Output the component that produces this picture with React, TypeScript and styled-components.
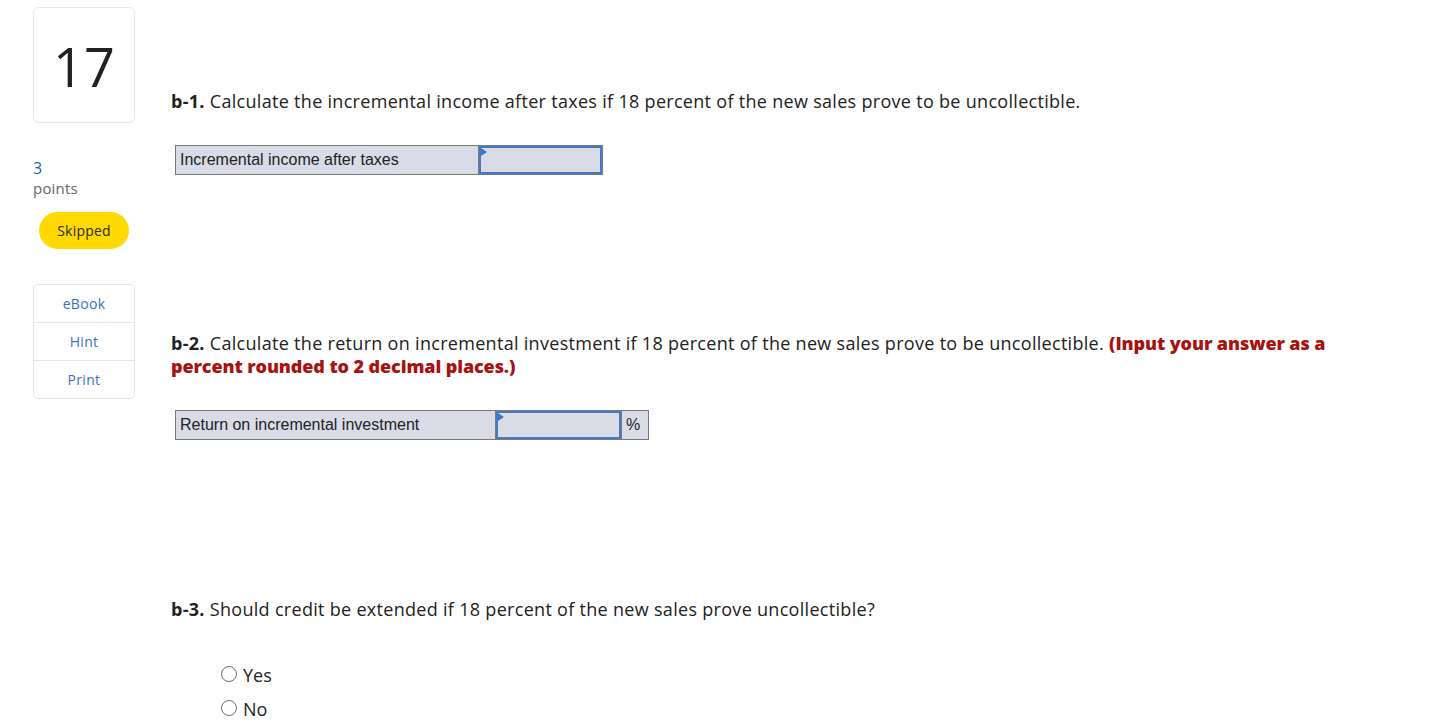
import styled, { createGlobalStyle } from "styled-components";

const GlobalStyle = createGlobalStyle`
  html, body {
    margin: 0;
    padding: 0;
    background: #ffffff;
  }
  body {
    font-family: "Open Sans", "Lato", sans-serif;
    color: #222222;
  }
`;

const Page = styled.div`
  display: flex;
  align-items: flex-start;
  padding: 7px 0 0 33px;
  gap: 36px;
`;

const Sidebar = styled.aside`
  width: 102px;
  display: flex;
  flex-direction: column;
`;

const NumberBox = styled.div`
  height: 116px;
  border: 1px solid #e8e8e8;
  border-radius: 6px;
  display: flex;
  align-items: center;
  justify-content: center;
  font-size: 54px;
  font-weight: 400;
  color: #222;
  padding-top: 2px;
  box-sizing: border-box;
`;

const Points = styled.div`
  margin-top: 35px;
  font-size: 16px;
  line-height: 20px;
  color: #1f5fae;
`;

const PointsLabel = styled.div`
  font-size: 15px;
  line-height: 20px;
  color: #666;
  letter-spacing: 0.2px;
`;

const Pill = styled.div`
  margin: 14px 0 0 6px;
  width: 90px;
  height: 37px;
  border-radius: 19px;
  background: #ffd900;
  display: flex;
  align-items: center;
  justify-content: center;
  font-size: 14px;
  letter-spacing: 0.2px;
  color: #2b2b2b;
`;

const Tools = styled.div`
  margin-top: 35px;
  border: 1px solid #e6e6e6;
  border-radius: 5px;
  display: flex;
  flex-direction: column;
`;

const ToolItem = styled.div<{ $last?: boolean }>`
  height: 37px;
  display: flex;
  align-items: center;
  justify-content: center;
  font-size: 14px;
  letter-spacing: 0.3px;
  color: #3d6fc2;
  border-bottom: ${(p) => (p.$last ? "none" : "1px solid #e6e6e6")};
`;

const Main = styled.main`
  padding-top: 83px;
  width: 1180px;
  display: flex;
  flex-direction: column;
`;

const Question = styled.p<{ $gap: number }>`
  margin: ${(p) => p.$gap}px 0 0;
  font-size: 18px;
  line-height: 23px;
  letter-spacing: 0.3px;
  color: #222;
  b {
    font-weight: 700;
  }
`;

const Warn = styled.strong`
  color: #a8120f;
  font-weight: 800;
  letter-spacing: -0.1px;
`;

const Table = styled.div`
  margin: 32px 0 0 4px;
  display: flex;
  align-self: flex-start;
  border: 1px solid #7a7a7a;
  background: #d9dce7;
  height: 28px;
  font-family: "Liberation Sans", Arial, sans-serif;
  font-size: 16px;
  color: #222;
`;

const LabelCell = styled.div<{ $w: number }>`
  width: ${(p) => p.$w}px;
  padding-left: 4px;
  box-sizing: border-box;
  display: flex;
  align-items: center;
  border-right: 1px solid #7a7a7a;
`;

const InputCell = styled.div<{ $w: number }>`
  position: relative;
  width: ${(p) => p.$w}px;
  box-sizing: border-box;
  border: 2px solid #4479c8;
  background: #d9dce7;
  &::before {
    content: "";
    position: absolute;
    left: 0;
    top: 0;
    border-top: 4px solid transparent;
    border-bottom: 4px solid transparent;
    border-left: 6px solid #3f75c6;
  }
`;

const UnitCell = styled.div`
  width: 27px;
  border-left: 1px solid #7a7a7a;
  display: flex;
  align-items: center;
  padding-left: 4px;
  box-sizing: border-box;
`;

const Options = styled.div`
  margin: 42px 0 0 50px;
  display: flex;
  flex-direction: column;
  gap: 10px;
`;

const Option = styled.label`
  display: flex;
  align-items: center;
  gap: 6px;
  font-size: 18px;
  line-height: 24px;
  color: #222;
`;

const Radio = styled.span`
  width: 14px;
  height: 14px;
  border: 1px solid #6f6f6f;
  border-radius: 50%;
  margin-top: -2px;
`;

const App: React.FC = () => {
  return (
    <>
      <GlobalStyle />
      <Page>
        <Sidebar>
          <NumberBox>17</NumberBox>
          <Points>3</Points>
          <PointsLabel>points</PointsLabel>
          <Pill>Skipped</Pill>
          <Tools>
            <ToolItem>eBook</ToolItem>
            <ToolItem>Hint</ToolItem>
            <ToolItem $last>Print</ToolItem>
          </Tools>
        </Sidebar>
        <Main>
          <Question $gap={0}>
            <b>b-1.</b> Calculate the incremental income after taxes if 18
            percent of the new sales prove to be uncollectible.
          </Question>
          <Table>
            <LabelCell $w={303}>Incremental income after taxes</LabelCell>
            <InputCell $w={123} />
          </Table>
          <Question $gap={157}>
            <b>b-2.</b> Calculate the return on incremental investment if 18
            percent of the new sales prove to be uncollectible.{" "}
            <Warn>(Input your answer as a percent rounded to 2 decimal places.)</Warn>
          </Question>
          <Table>
            <LabelCell $w={320}>Return on incremental investment</LabelCell>
            <InputCell $w={125} />
            <UnitCell>%</UnitCell>
          </Table>
          <Question $gap={158}>
            <b>b-3.</b> Should credit be extended if 18 percent of the new sales
            prove uncollectible?
          </Question>
          <Options>
            <Option>
              <Radio />
              Yes
            </Option>
            <Option>
              <Radio />
              No
            </Option>
          </Options>
        </Main>
      </Page>
    </>
  );
};

export default App;
